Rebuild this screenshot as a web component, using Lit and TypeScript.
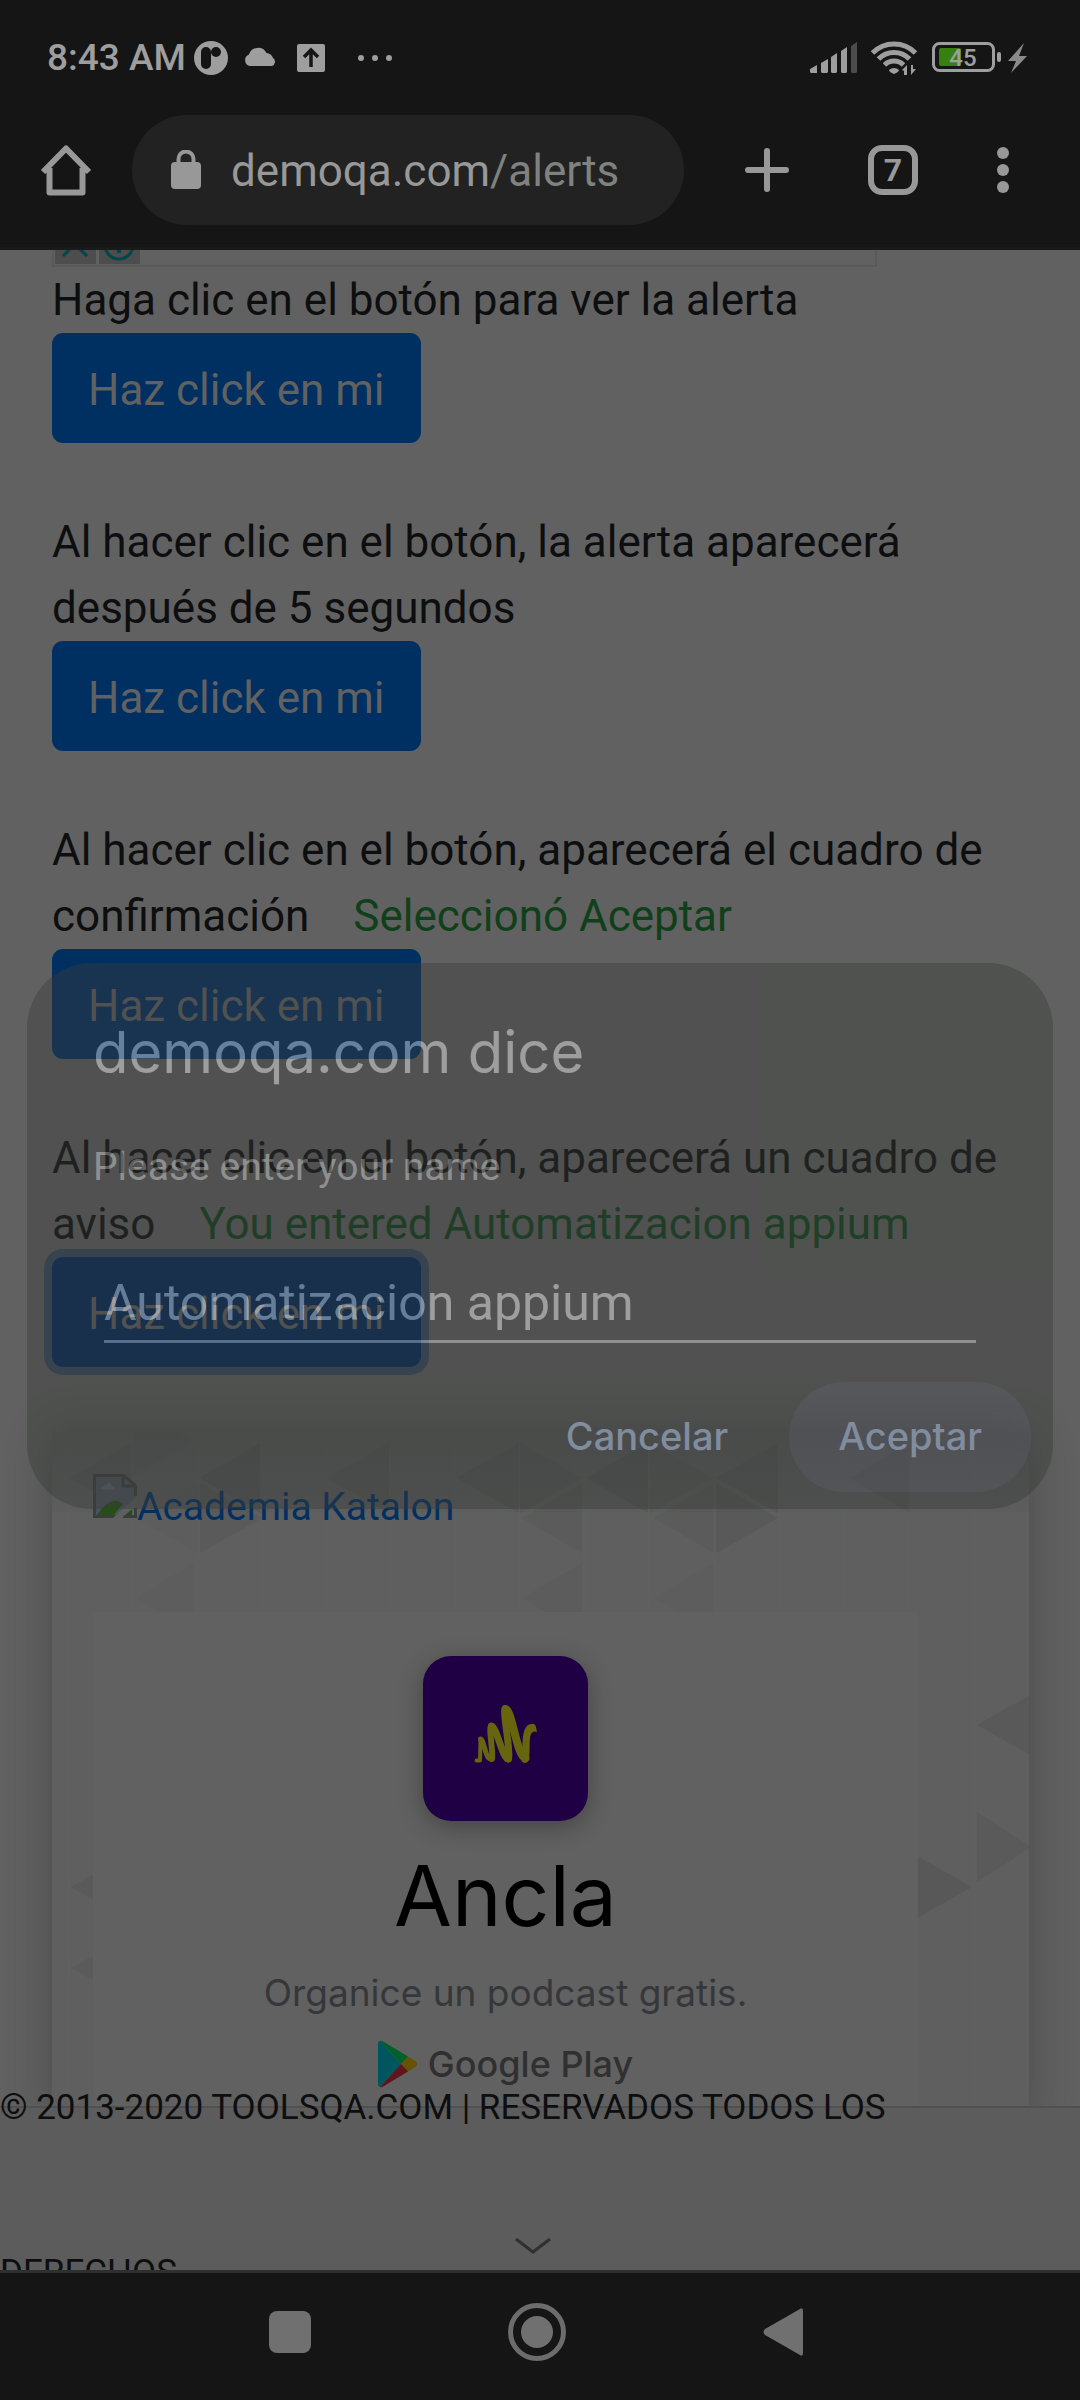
import { LitElement, html, css, svg, nothing } from "lit";
import { customElement, property } from "lit/decorators.js";

interface AlertRow {
  text: string;
  result?: string;
  focused?: boolean;
}

const rows: AlertRow[] = [
  { text: "Haga clic en el botón para ver la alerta" },
  { text: "Al hacer clic en el botón, la alerta aparecerá después de 5 segundos" },
  {
    text: "Al hacer clic en el botón, aparecerá el cuadro de confirmación",
    result: "Seleccionó Aceptar",
  },
  {
    text: "Al hacer clic en el botón, aparecerá un cuadro de aviso",
    result: "You entered Automatizacion appium",
    focused: true,
  },
];

@customElement("status-bar")
class StatusBar extends LitElement {
  static styles = css`
    :host {
      display: flex;
      align-items: center;
      justify-content: space-between;
      box-sizing: border-box;
      height: 76px;
      padding: 40px 52px 0 47px;
      color: #9e9e9e;
    }
    .group {
      display: flex;
      align-items: center;
    }
    .time {
      font-size: 37px;
      line-height: 40px;
      font-weight: 500;
      white-space: nowrap;
    }
    svg {
      display: block;
      fill: currentColor;
    }
    .notices {
      margin-left: 8px;
    }
    .level {
      font: 500 24px Roboto, sans-serif;
    }
  `;

  render() {
    return html`
      <div class="group">
        <span class="time">8:43 AM</span>
        <svg class="notices" width="200" height="36" viewBox="194 39 200 36" aria-hidden="true">
          <circle cx="211" cy="57" r="17" />
          <rect x="201" y="46" width="10" height="22" rx="5" fill="#151515" />
          <circle cx="216" cy="51" r="5" fill="#151515" />
          <path d="M250 65a6 6 0 0 1-1-11.500a9.500 9.500 0 0 1 17.500-1.500a7.500 7.500 0 0 1 6.500 5a4.500 4.500 0 0 1-1 8z" />
          <rect x="297" y="43" width="28" height="28" rx="2" />
          <path d="M311 66V50M304 56l7-7 7 7" fill="none" stroke="#151515" stroke-width="3.500" />
          <circle cx="361" cy="57" r="3" />
          <circle cx="375" cy="57" r="3" />
          <circle cx="389" cy="57" r="3" />
        </svg>
      </div>
      <svg width="218" height="40" viewBox="810 38 218 40" aria-hidden="true">
        <path d="M810 69l7-4v8h-6l-1-1zM821 63l7-4v13l-1 1h-5l-1-1zM831 57l6-4v19l-1 1h-4l-1-1zM841 51l6-4v25l-1 1h-4l-1-1z" />
        <path d="M851 46l6-4v30l-1 1h-4l-1-1z" fill="#4c4c4c" />
        <g fill="none" stroke="currentColor" stroke-width="5">
          <path d="M872.500 53a30 30 0 0 1 43 0" />
          <path d="M878.500 59a21.500 21.500 0 0 1 31 0" />
          <path d="M884.500 65a13.500 13.500 0 0 1 19 0" />
        </g>
        <path d="M889 70a7 7 0 0 1 10 0q0 2-5 4q-5-2-5-4z" />
        <path d="M902 70l5-5v10h-3v-4zM911 75V65h2v4h3z" />
        <rect x="933.500" y="43.500" width="60" height="27" rx="6" fill="none" stroke="currentColor" stroke-width="3" />
        <rect x="939" y="48" width="22" height="18" rx="2" fill="#37800f" />
        <rect x="997" y="52" width="4" height="10" rx="2" />
        <text class="level" x="963" y="66" text-anchor="middle">45</text>
        <path d="M1024 43l-16 18h8l-5 12 16-17h-8z" fill="#8a8a8a" />
      </svg>
    `;
  }
}

@customElement("browser-toolbar")
class BrowserToolbar extends LitElement {
  static styles = css`
    :host {
      display: flex;
      align-items: center;
      box-sizing: border-box;
      height: 174px;
      padding: 16px 47px 0 36px;
      border-bottom: 3px solid #1a1a1a;
      color: #989898;
    }
    button {
      display: flex;
      align-items: center;
      justify-content: center;
      flex: none;
      width: 60px;
      height: 60px;
      padding: 0;
      border: 0;
      background: none;
      color: inherit;
      font: inherit;
    }
    svg {
      display: block;
      fill: none;
      stroke: currentColor;
      stroke-width: 6;
    }
    .address {
      display: flex;
      align-items: center;
      flex: 1;
      gap: 30px;
      min-width: 0;
      height: 110px;
      margin-left: 36px;
      margin-right: 53px;
      padding: 2px 39px 0;
      box-sizing: border-box;
      border-radius: 55px;
      background: #222222;
    }
    .address svg {
      margin-bottom: 2px;
    }
    .address a {
      color: #989898;
      font-size: 44px;
      line-height: 66px;
      text-decoration: none;
      white-space: nowrap;
    }
    .address span {
      color: #7f827f;
    }
    .tabs {
      margin-left: 66px;
    }
    .count {
      box-sizing: border-box;
      width: 50px;
      height: 50px;
      border: 6px solid currentColor;
      border-radius: 14px;
      font-size: 32px;
      font-weight: 700;
      line-height: 38px;
      text-align: center;
    }
    .more {
      margin-left: 50px;
    }
  `;

  render() {
    return html`
      <button aria-label="Inicio">
        <svg width="52" height="52" viewBox="40 144 52 52">
          <path d="M43 172l23-23.500 23 23.500M49.500 168v24.500h33V168" stroke-linejoin="round" />
        </svg>
      </button>
      <div class="address">
        <svg width="30" height="40" viewBox="172 150 30 40" aria-hidden="true">
          <rect x="172" y="162" width="30" height="27" rx="4" fill="currentColor" stroke="none" />
          <path d="M179.500 164v-5a7.500 7.500 0 0 1 15 0v5" stroke-width="4" />
        </svg>
        <a href="#alerts">demoqa.com<span>/alerts</span></a>
      </div>
      <button aria-label="Nueva pestaña">
        <svg width="46" height="46" viewBox="0 0 46 46">
          <path d="M23 4v38M4 23h38" stroke-linecap="round" />
        </svg>
      </button>
      <button class="tabs" aria-label="Pestañas"><span class="count">7</span></button>
      <button class="more" aria-label="Más opciones">
        <svg width="12" height="46" viewBox="0 0 12 46">
          <g fill="currentColor" stroke="none">
            <circle cx="6" cy="6" r="6" />
            <circle cx="6" cy="23" r="6" />
            <circle cx="6" cy="40" r="6" />
          </g>
        </svg>
      </button>
    `;
  }
}

@customElement("alert-row")
class AlertRowElement extends LitElement {
  static styles = css`
    :host {
      display: block;
      font-size: 44px;
      line-height: 66px;
      color: #0d0e0f;
    }
    p {
      margin: 0;
    }
    .result {
      margin-left: 33px;
      color: #0f401a;
    }
    button {
      display: block;
      box-sizing: border-box;
      padding: 24px 36px 20px;
      border: 0;
      border-radius: 11px;
      background: #002f61;
      color: #616161;
      font: inherit;
    }
    .focused {
      background: #00285a;
      box-shadow: 0 0 0 8px #374a61;
    }
  `;

  @property({ attribute: false }) row: AlertRow = rows[0];

  render() {
    const { text, result, focused } = this.row;
    return html`
      <p>${text} ${result ? html`<span class="result">${result}</span>` : nothing}</p>
      <button class=${focused ? "focused" : ""}>Haz click en mi</button>
    `;
  }
}

// Triangles of the banner's backdrop: [apex x, apex y, base x, fill].
const triangles: [number, number, number, string][] = [
  [17, 46, 79, "#5a5a5a"],
  [148, 46, 208, "#585858"],
  [275, 46, 337, "#5a5a5a"],
  [405, 46, 467, "#595959"],
  [530, 46, 468, "#5a5a5a"],
  [534, 46, 596, "#585858"],
  [660, 46, 598, "#5b5b5b"],
  [664, 46, 726, "#595959"],
  [798, 46, 858, "#5a5a5a"],
  [142, 9, 80, "#5c5c5c"],
  [210, 86, 148, "#5a5a5a"],
  [84, 86, 146, "#5d5d5d"],
  [470, 86, 530, "#5b5b5b"],
  [602, 86, 662, "#5b5b5b"],
  [726, 86, 664, "#595959"],
  [84, 166, 142, "#5d5d5d"],
  [470, 166, 530, "#5c5c5c"],
  [602, 166, 662, "#5d5d5d"],
  [925, 293, 987, "#595959"],
  [979, 415, 925, "#5a5a5a"],
  [920, 455, 858, "#585858"],
  [19, 455, 81, "#5a5a5a"],
  [19, 536, 81, "#5b5b5b"],
];

@customElement("ad-banner")
class AdBanner extends LitElement {
  static styles = css`
    :host {
      display: block;
      position: relative;
      padding: 42px 41px 0;
      background: #5f5f5f;
      box-shadow: 0 0 42px 0 rgba(20, 22, 28, 0.28);
    }
    .backdrop {
      position: absolute;
      inset: 0;
      width: 100%;
      height: 100%;
    }
    .shade {
      position: absolute;
      inset: 0 0 auto;
      height: 80px;
      background: linear-gradient(rgba(40, 42, 50, 0.16), rgba(40, 42, 50, 0.04));
    }
    .link {
      display: flex;
      position: relative;
      width: max-content;
      height: 48px;
      margin-bottom: 90px;
      color: #002f61;
      font-size: 39px;
      text-decoration: none;
    }
    .link span {
      padding-top: 13px;
      line-height: 40px;
    }
    .app {
      display: flex;
      flex-direction: column;
      align-items: center;
      position: relative;
      max-width: 825px;
      padding: 44px 0 40px;
      box-sizing: border-box;
      background: #616161;
      font-family: Inter, Roboto, sans-serif;
    }
    .logo {
      display: block;
      border-radius: 28px;
      background: #1f0045;
      box-shadow: 0 6px 24px rgba(0, 0, 0, 0.3);
    }
    h2 {
      margin: 25px 0 0;
      color: #000000;
      font-size: 84px;
      line-height: 100px;
      font-weight: 400;
    }
    p {
      margin: 23px 0;
      color: #35373a;
      font-size: 37px;
      line-height: 48px;
    }
    .store {
      display: flex;
      align-items: center;
      gap: 10px;
      color: #303030;
      font-size: 36px;
      line-height: 48px;
      font-weight: 500;
    }
  `;

  render() {
    return html`
      <svg class="backdrop" aria-hidden="true">
        ${triangles.map(
          ([x, y, base, fill]) =>
            svg`<path d="M${x} ${y}L${base} ${y - 35}V${y + 35}Z" fill=${fill} />`
        )}
        <g stroke="#636363" stroke-opacity=".5">
          <path d="M17 20V700M81 0V180M146 0V180M210 0V180M274 0V180M338 0V180M403 0V180M467 0V180M532 0V180M597 0V180M662 0V180M727 0V180M792 0V180M857 0V180M922 0V700" />
        </g>
      </svg>
      <div class="shade"></div>
      <a class="link" href="#academia">
        <svg width="44" height="44" viewBox="0 0 44 44" aria-hidden="true">
          <path d="M1.500 1.500H31L42.500 13V25L22 42.500H1.500Z" fill="#4d535e" />
          <path d="M8 15q2-4 5-4q3-5 6 1q4 1 3 4z" fill="#5f6266" />
          <path d="M4 41Q18 20 30 30L21 41Z" fill="#255015" />
          <path d="M32 41L39 35V41Z" fill="#255015" />
          <path d="M42.500 22V12L31 1.500H1.500V42.500H24M30 2V12H42M30 42.500H42.500V34" fill="none" stroke="#3b3d3d" stroke-width="3" />
          <path d="M44 22L20 44H28L44 31Z" fill="#5e5e5e" />
        </svg>
        <span>Academia Katalon</span>
      </a>
      <section class="app">
        <svg class="logo" width="165" height="165" viewBox="0 0 165 165" aria-hidden="true">
          <g fill="none" stroke="#67660f" stroke-linecap="round" stroke-linejoin="round">
            <path d="M53.500 104.500H57L57.500 84" stroke-width="4" />
            <path d="M57.500 83C61 83 62 103 68 103" stroke-width="5" />
            <path d="M69 103C70.500 95 65 70 68.500 70" stroke-width="6" />
            <path d="M68.500 70C73 70 80 103 85 103" stroke-width="7" />
            <path d="M85.500 103C88 95 79 53 82.500 53" stroke-width="7" />
            <path d="M82.500 53C89 53 94 102 102.500 102" stroke-width="8" />
          </g>
          <path d="M98 102C101 90 97 70 108 68Q112 67 113 71L114 76Q108 74 107 82C106 92 108 106 102.500 107Q98 107 98 102Z" fill="#67660f" />
        </svg>
        <h2>Ancla</h2>
        <p>Organice un podcast gratis.</p>
        <div class="store">
          <svg width="40" height="48" viewBox="0 0 40 48" aria-hidden="true">
            <path d="M2 1Q0 1 0 4V44Q0 47 2 47L23 24Z" fill="#00555f" />
            <path d="M2 1Q3 0 6 2L30 16.500 23 24Z" fill="#00602a" />
            <path d="M30 16.500L37.500 21Q41 24 37.500 27L30 31.500 23 24Z" fill="#665200" />
            <path d="M2 47Q3 48 6 46L30 31.500 23 24Z" fill="#60151d" />
          </svg>
          <span>Google Play</span>
        </div>
      </section>
    `;
  }
}

@customElement("prompt-dialog")
class PromptDialog extends LitElement {
  static styles = css`
    :host {
      display: block;
      box-sizing: border-box;
      width: 100%;
      padding: 54px 22px 17px 66px;
      border-radius: 65px;
      background: #393d39;
      color: #f2f2f2;
      opacity: 0.42;
    }
    h1 {
      margin: 0 0 57px;
      font: 400 58px/70px Inter, Roboto, sans-serif;
    }
    label {
      display: block;
      margin-bottom: 79px;
      color: #cfcfcf;
      font-size: 39px;
      line-height: 46px;
    }
    .field {
      padding: 0 55px 0 11px;
    }
    input {
      display: block;
      box-sizing: border-box;
      width: 100%;
      height: 74px;
      padding: 0 0 4px;
      border: 0;
      border-bottom: 3px solid #d2d2d2;
      border-radius: 0;
      outline: 0;
      background: none;
      color: inherit;
      font: 400 50px Roboto, sans-serif;
    }
    .actions {
      display: flex;
      justify-content: flex-end;
      gap: 12px;
      margin-top: 39px;
    }
    button {
      height: 110px;
      padding: 0 49px 2px;
      border: 0;
      border-radius: 55px;
      background: none;
      color: #bbd7ff;
      font: 500 38px Inter, Roboto, sans-serif;
    }
    .accept {
      background: #484b53;
    }
  `;

  render() {
    return html`
      <h1>demoqa.com dice</h1>
      <label for="name">Please enter your name</label>
      <div class="field"><input id="name" type="text" .value=${"Automatizacion appium"} /></div>
      <div class="actions">
        <button>Cancelar</button>
        <button class="accept">Aceptar</button>
      </div>
    `;
  }
}

@customElement("app-root")
class AppRoot extends LitElement {
  static styles = css`
    :host {
      display: flex;
      flex-direction: column;
      position: relative;
      height: 100vh;
      overflow: hidden;
      background: #151515;
      font-family: Roboto, "Liberation Sans", sans-serif;
    }
    main {
      flex: 1;
      min-height: 0;
      overflow: hidden;
      padding: 0 51px 0 52px;
      background: #616161;
    }
    .strip {
      display: flex;
      gap: 3px;
      box-sizing: border-box;
      max-width: 825px;
      height: 17px;
      padding: 0 1px 1px;
      border: solid #595959;
      border-width: 0 2px 2px;
    }
    .strip svg {
      display: block;
      background: #4d4d4d;
    }
    .rows {
      display: grid;
      gap: 66px;
      margin-bottom: 65px;
    }
    footer {
      position: relative;
      box-sizing: border-box;
      height: 164px;
      overflow: visible;
      border-top: 2px solid #505050;
      background: #5c5c5c;
      color: #0d0e0f;
    }
    footer p {
      width: 90%;
      margin: -83px 0 0;
      font-size: 35px;
      line-height: 165px;
    }
    .expand {
      position: absolute;
      left: 50%;
      bottom: 15px;
      display: block;
      margin-left: -25px;
      padding: 0;
      border: 0;
      background: none;
    }
    .expand svg {
      display: block;
    }
    nav {
      display: flex;
      justify-content: center;
      align-items: center;
      gap: 187px;
      position: relative;
      box-sizing: border-box;
      height: 130px;
      padding-right: 6px;
      padding-bottom: 9px;
      border-top: 3px solid #2d302e;
      background: #151515;
    }
    nav button {
      width: 60px;
      height: 60px;
      padding: 0;
      border: 0;
      background: none;
    }
    nav svg {
      display: block;
      fill: #707070;
    }
    .overlay {
      display: flex;
      align-items: center;
      position: absolute;
      inset: 72px 27px 0;
    }
  `;

  render() {
    return html`
      <status-bar></status-bar>
      <browser-toolbar></browser-toolbar>
      <main>
        <div class="strip">
          <svg width="41" height="14" viewBox="0 0 41 14" aria-hidden="true">
            <path d="M8 6L20-6 32 6" fill="none" stroke="#00464f" stroke-width="3" />
          </svg>
          <svg width="41" height="14" viewBox="0 0 41 14" aria-hidden="true">
            <circle cx="20" cy="-5" r="14" fill="none" stroke="#00464f" stroke-width="3" />
            <path d="M20-8V3" stroke="#00464f" stroke-width="4" />
          </svg>
        </div>
        <div class="rows">${rows.map((row) => html`<alert-row .row=${row}></alert-row>`)}</div>
        <ad-banner></ad-banner>
      </main>
      <footer>
        <p>© 2013-2020 TOOLSQA.COM | RESERVADOS TODOS LOS DERECHOS</p>
        <button class="expand" aria-label="Expandir">
          <svg width="36" height="18" viewBox="0 0 36 18">
            <path d="M1 2L18 15 35 2" fill="none" stroke="#303030" stroke-width="3" />
          </svg>
        </button>
      </footer>
      <nav>
        <button aria-label="Recientes">
          <svg width="60" height="60" viewBox="0 0 60 60">
            <rect x="9" y="9" width="42" height="42" rx="8" />
          </svg>
        </button>
        <button aria-label="Inicio">
          <svg width="60" height="60" viewBox="0 0 60 60">
            <circle cx="30" cy="30" r="26.500" fill="none" stroke="#6c6c6c" stroke-width="5" />
            <circle cx="30" cy="30" r="16" />
          </svg>
        </button>
        <button aria-label="Atrás">
          <svg width="60" height="60" viewBox="0 0 60 60">
            <path d="M11 27L46 7Q49 5 49 9V51Q49 55 46 53L11 33Q8 30 11 27Z" />
          </svg>
        </button>
      </nav>
      <div class="overlay">
        <prompt-dialog role="dialog" aria-label="demoqa.com dice"></prompt-dialog>
      </div>
    `;
  }
}
